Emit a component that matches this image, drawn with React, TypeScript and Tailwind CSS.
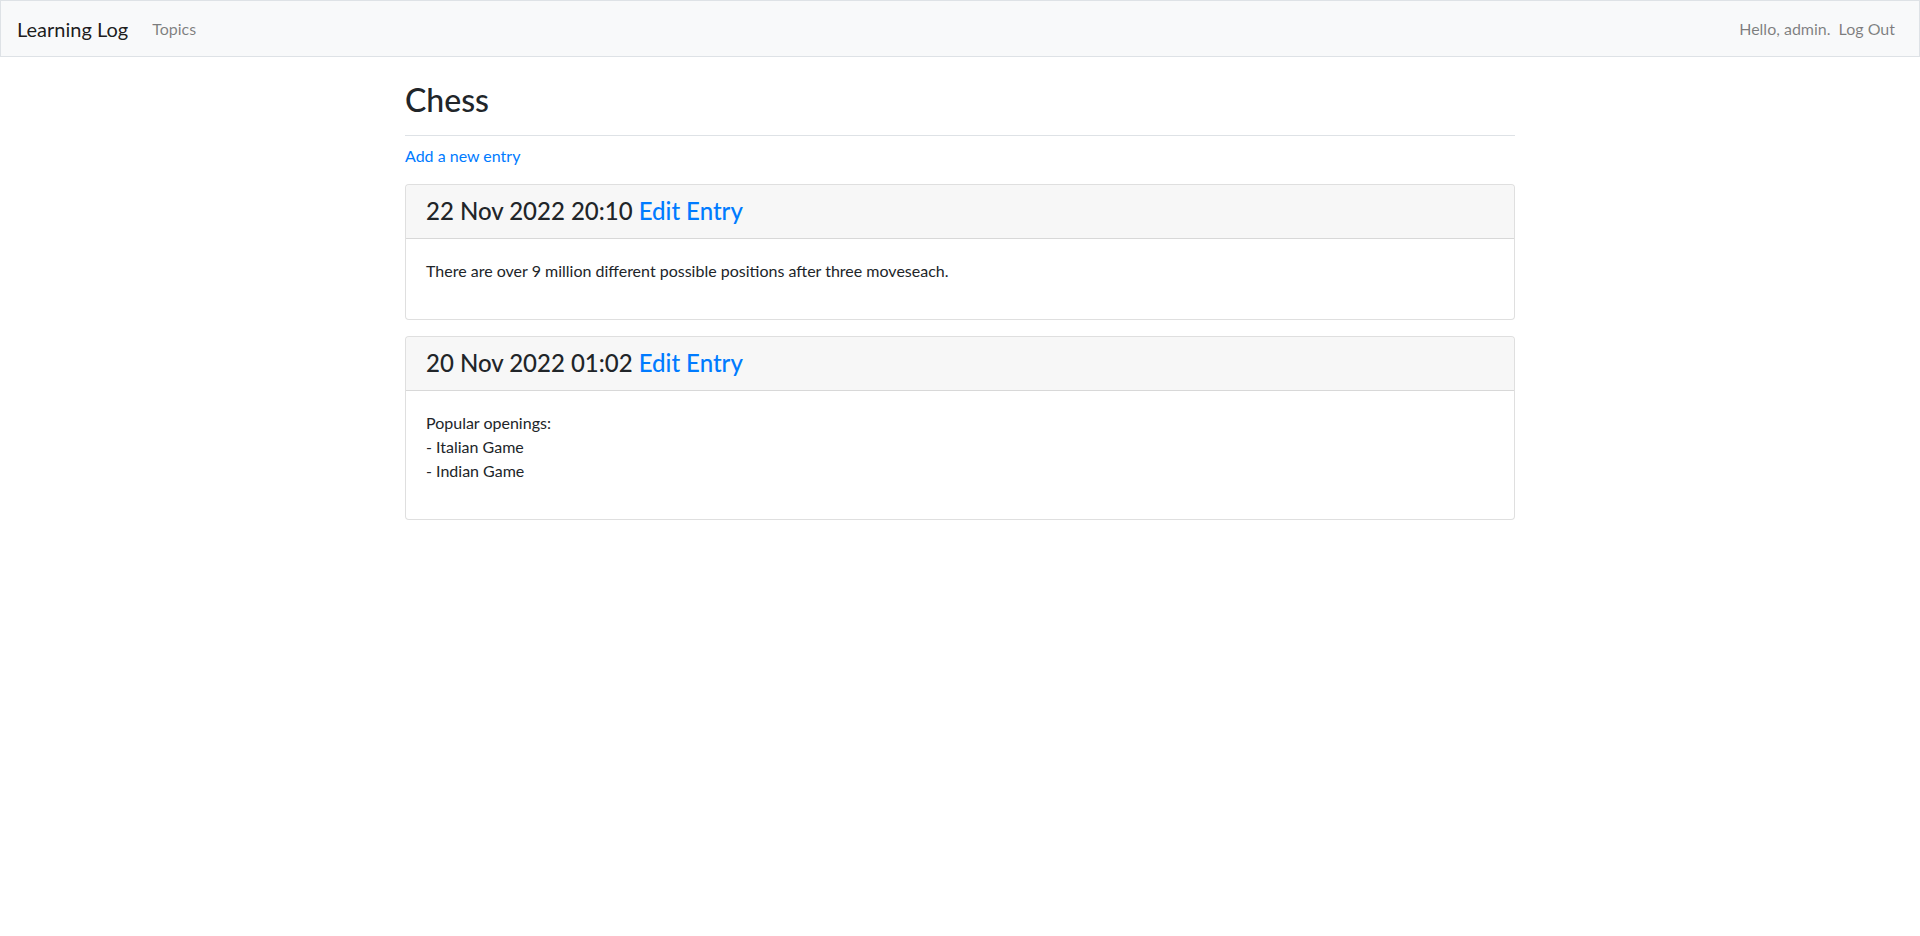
import React from "react";

const entries = [
  {
    date: "22 Nov 2022 20:10",
    lines: ["There are over 9 million different possible positions after three moveseach."],
  },
  {
    date: "20 Nov 2022 01:02",
    lines: ["Popular openings:", "- Italian Game", "- Indian Game"],
  },
];

export default function App() {
  return (
    <div className="min-h-screen bg-white text-[#212529] text-base leading-normal font-['Lato','Noto_Sans',sans-serif]">
      <nav className="h-[57px] box-border flex items-center justify-between border border-[#dee2e6] bg-[#f8f9fa] px-4">
        <div className="flex items-center">
          <a href="#" className="text-[20px] leading-[30px] py-[5px] mr-4 text-black/90">
            Learning Log
          </a>
          <a href="#" className="px-2 py-2 text-black/50">
            Topics
          </a>
        </div>
        <div className="flex items-center">
          <span className="py-2 text-black/50">Hello, admin.</span>
          <a href="#" className="px-2 py-2 text-black/50">
            Log Out
          </a>
        </div>
      </nav>
      <main className="w-[1110px] mx-auto mt-6">
        <div className="pb-2 mb-2 border-b border-[#dee2e6]">
          <h2 className="text-[32px] leading-[1.2] font-medium mb-2">Chess</h2>
        </div>
        <p className="mb-4">
          <a href="#" className="text-[#007bff]">
            Add a new entry
          </a>
        </p>
        {entries.map((e) => (
          <div key={e.date} className="mb-4 border border-black/[.125] rounded bg-white">
            <h4 className="m-0 px-5 py-3 text-2xl leading-[1.2] font-medium bg-black/[.03] border-b border-black/[.125] rounded-t">
              {e.date} <a href="#" className="text-[#007bff]">Edit Entry</a>
            </h4>
            <div className="p-5">
              <p className="mb-4">
                {e.lines.map((l, i) => (
                  <React.Fragment key={i}>
                    {i > 0 && <br />}
                    {l}
                  </React.Fragment>
                ))}
              </p>
            </div>
          </div>
        ))}
      </main>
    </div>
  );
}
